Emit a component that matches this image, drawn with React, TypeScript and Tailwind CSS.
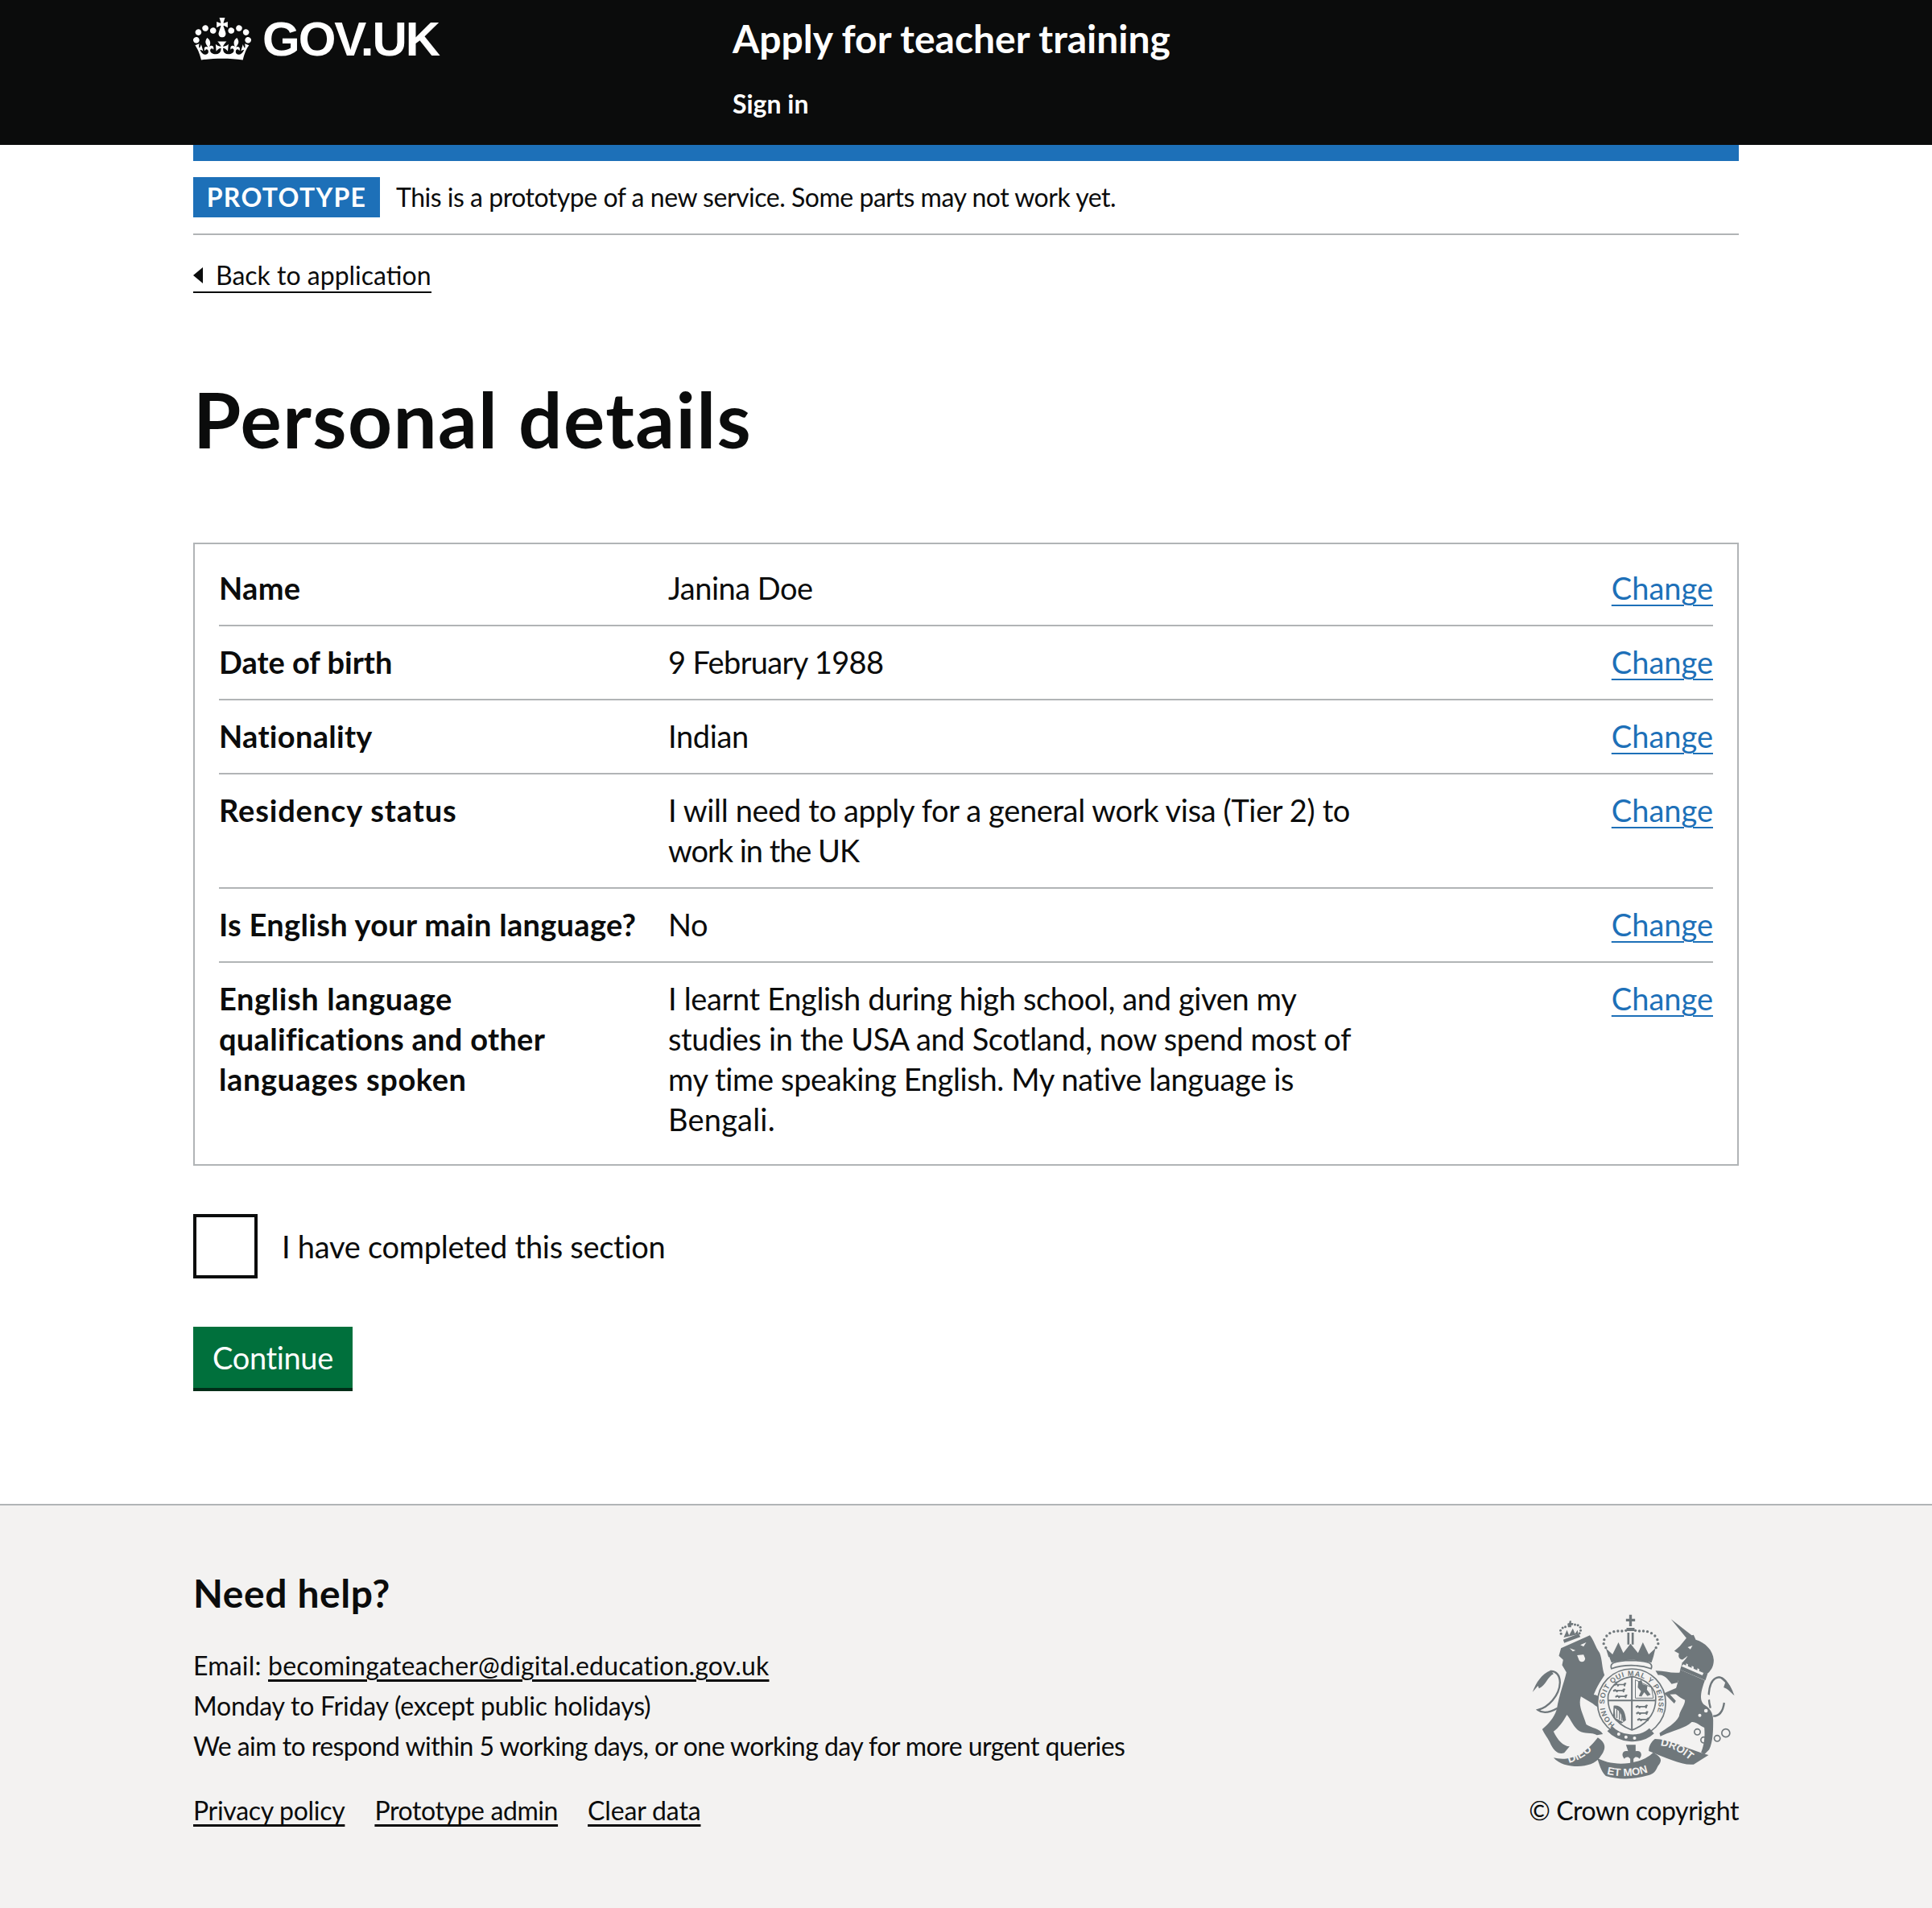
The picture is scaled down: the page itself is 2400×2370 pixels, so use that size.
import React from "react";

const font = "font-['Lato','Liberation_Sans',sans-serif]";

type Row = {
  label: string[];
  value: string[];
};

const rows: Row[] = [
  { label: ["Name"], value: ["Janina Doe"] },
  { label: ["Date of birth"], value: ["9 February 1988"] },
  { label: ["Nationality"], value: ["Indian"] },
  {
    label: ["Residency status"],
    value: ["I will need to apply for a general work visa (Tier 2) to", "work in the UK"],
  },
  { label: ["Is English your main language?"], value: ["No"] },
  {
    label: ["English language", "qualifications and other", "languages spoken"],
    value: [
      "I learnt English during high school, and given my",
      "studies in the USA and Scotland, now spend most of",
      "my time speaking English. My native language is",
      "Bengali.",
    ],
  },
];

// Lato runs a little differently from the original face on these lines
const lineTracking: Record<string, string> = {
  "Date of birth": "tracking-[0px]",
  "Residency status": "tracking-[0.85px]",
  "English language": "tracking-[0.6px]",
  "languages spoken": "tracking-[0.6px]",
  "Janina Doe": "tracking-[-0.5px]",
  "9 February 1988": "tracking-[-0.66px]",
  "work in the UK": "tracking-[-1.05px]",
  "Bengali.": "tracking-[0.2px]",
};

function Crown() {
  return (
    <svg viewBox="0 0 132 97" className="w-[72px] h-[53px] fill-white" aria-hidden="true">
      <path
        fillRule="evenodd"
        d="M25 30.2c3.5 1.5 7.7-.2 9.1-3.7 1.5-3.6-.2-7.8-3.9-9.2-3.6-1.4-7.6.3-9.1 3.9-1.4 3.5.3 7.5 3.9 9zM9 39.5c3.6 1.5 7.8-.2 9.2-3.7 1.5-3.6-.2-7.8-3.9-9.1-3.6-1.5-7.6.2-9.1 3.8-1.4 3.5.3 7.5 3.8 9zM4.4 57.2c3.5 1.5 7.7-.2 9.1-3.8 1.5-3.6-.2-7.7-3.9-9.1-3.5-1.5-7.6.3-9.1 3.8-1.4 3.5.3 7.6 3.9 9.1zm38.3-21.4c3.5 1.5 7.7-.2 9.1-3.8 1.5-3.6-.2-7.7-3.9-9.1-3.6-1.5-7.6.3-9.1 3.8-1.3 3.6.4 7.7 3.9 9.1zm64.4-5.6c-3.6 1.5-7.8-.2-9.1-3.7-1.5-3.6.2-7.8 3.8-9.2 3.6-1.4 7.7.3 9.2 3.9 1.3 3.5-.4 7.5-3.9 9zm15.9 9.3c-3.6 1.5-7.7-.2-9.1-3.7-1.5-3.6.2-7.8 3.7-9.1 3.6-1.5 7.7.2 9.2 3.8 1.5 3.5-.3 7.5-3.8 9zm4.7 17.7c-3.6 1.5-7.8-.2-9.2-3.8-1.5-3.6.2-7.7 3.9-9.1 3.6-1.5 7.7.3 9.2 3.8 1.3 3.5-.4 7.6-3.9 9.1zM89.3 35.8c-3.6 1.5-7.8-.2-9.2-3.8-1.4-3.6.2-7.7 3.9-9.1 3.6-1.5 7.7.3 9.2 3.8 1.4 3.6-.3 7.7-3.9 9.1zM69.7 17.7l8.9 4.7V9.3l-8.9 2.8c-.2-.3-.5-.6-.9-.9L72.4 0H59.6l3.5 11.2c-.3.3-.6.5-.9.9l-8.8-2.8v13.1l8.8-4.7c.3.3.6.7.9.9l-5 15.4v.1c-.2.8-.4 1.6-.4 2.4 0 4.1 3.1 7.5 7 8.1h.2c.3 0 .7.1 1 .1.4 0 .7 0 1-.1h.2c4-.6 7.1-4.1 7.1-8.1 0-.8-.1-1.7-.4-2.4V34l-5.1-15.4c.4-.2.7-.6 1-.9zM66 92.8c16.9 0 32.8 1.1 47.1 3.2 4-16.9 8.9-26.7 14-33.5l-9.6-3.4c1 4.9 1.1 7.2 0 10.2-1.5-1.4-3-4.3-4.2-8.7L108.6 76c2.8-2 5-3.2 7.5-3.3-4.4 9.4-10 11.9-13.6 11.2-4.3-.8-6.3-4.6-5.6-7.9 1-4.7 5.7-5.9 8-.5 4.3-8.7-3-11.4-7.6-8.8 7.1-7.2 7.9-13.5 2.1-21.1-8 6.1-8.1 12.3-4.5 20.8-4.7-5.4-12.1-2.5-9.5 6.2 3.4-5.2 7.9-2 7.2 3.1-.6 4.3-6.4 7.8-13.5 7.2-10.3-.9-10.9-8-11.2-13.8 2.5-.5 7.1 1.8 11 7.3L80.2 60c-4.1 4.4-8 5.3-12.3 5.4 1.4-4.4 8-11.6 8-11.6H55.5s6.4 7.2 7.9 11.6c-4.2-.1-8-1-12.3-5.4l1.4 16.4c3.9-5.5 8.5-7.7 10.9-7.3-.3 5.8-.9 12.8-11.1 13.8-7.2.6-12.9-2.9-13.5-7.2-.7-5 3.8-8.3 7.1-3.1 2.7-8.7-4.6-11.6-9.4-6.2 3.7-8.5 3.6-14.7-4.6-20.8-5.8 7.6-5 13.9 2.2 21.1-4.7-2.6-11.9.1-7.7 8.8 2.3-5.5 7.1-4.2 8.1.5.7 3.3-1.3 7.1-5.7 7.9-3.5.7-9-1.8-13.5-11.2 2.5.1 4.7 1.3 7.5 3.3l-4.7-15.4c-1.2 4.4-2.7 7.2-4.3 8.7-1.1-3-.9-5.3 0-10.2l-9.5 3.4c5 6.9 9.9 16.7 14 33.5 14.8-2.1 30.8-3.2 47.7-3.2z"
      />
    </svg>
  );
}

// Small walking lion used in the shield quarters
function Passant({ x, y }: { x: number; y: number }) {
  return (
    <path
      transform={`translate(${x} ${y})`}
      d="M0 2 l8 -4 l4 3 l22 0 l6 -5 l6 2 l-3 5 l-2 7 l-4 0 l-2 -4 l-16 0 l-3 4 l-5 0 l0 -4 l-6 0 l-1 3 l-4 -3 Z"
    />
  );
}

// Royal coat of arms, hand drawn; coordinates follow a 3x crop of the crest
function Crest() {
  const grey = "#6f777b";
  const bg = "#f3f2f1";
  return (
    <svg viewBox="70 45 755 615" className="w-[252px] h-[205px] mr-[5px]" aria-hidden="true">
      <defs>
        <path id="garter" d="M379 456 A101 101 0 1 1 497 460" />
        <path id="dieu" d="M205 600 C250 590 290 560 325 520" />
        <path id="etMon" d="M345 640 C400 655 470 650 525 625" />
        <path id="droit" d="M548 535 C590 540 635 565 670 600" />
      </defs>

      {/* lion */}
      <path
        fill={grey}
        d="M178 172 L285 124 C300 140 305 165 322 190 C332 215 330 245 340 272 L322 300 C310 320 304 335 300 345 C322 348 338 366 345 388 L335 412 C322 395 308 388 296 378 L252 352 C240 388 262 420 272 456 C292 470 322 470 334 492 L312 496 C290 484 265 492 245 480 C226 468 216 440 200 420 C186 445 168 470 150 482 C166 516 186 536 210 538 L190 562 C170 570 150 556 136 522 C128 506 116 492 108 474 C130 456 152 432 162 400 C172 340 190 300 198 262 L182 235 L186 215 L170 200 Z"
      />
      <path fill="none" stroke={grey} strokeWidth="7" d="M165 395 C130 415 105 412 92 402 C130 392 172 350 174 300 C174 272 158 255 138 258" />
      <path fill={grey} d="M72 335 C85 300 105 268 140 254 L150 268 C128 278 122 310 96 322 L92 312 Z" />
      <path fill={bg} d="M210 172 L232 180 L222 184 Z M250 160 L272 150 L262 166 Z M238 198 L262 196 L268 210 C268 225 248 228 244 214 Z" />
      {/* lion crown */}
      <path fill={grey} d="M186 140 L244 118 L250 130 L190 152 Z M204 94 L202 80 L208 78 L210 70 L216 70 L216 78 L224 78 L222 86 L216 86 L216 94 Z" />
      <path fill={grey} d="M188 132 L200 104 L208 124 L222 98 L230 118 L240 104 L242 120 Z" />
      <g fill={grey}>
        {[
          [178, 118], [176, 106], [184, 96], [194, 92], [230, 84], [241, 86], [250, 94], [251, 106], [247, 116],
        ].map(([cx, cy]) => (
          <circle key={`${cx}-${cy}`} cx={cx} cy={cy} r="4.5" />
        ))}
      </g>

      {/* unicorn */}
      <path fill={grey} d="M588 64 L668 126 L650 140 Z" />
      <path fill={grey} d="M650 128 L672 122 L680 140 C715 150 745 180 747 215 C748 240 735 258 722 268 L628 228 C640 215 648 205 650 200 L632 214 C622 216 612 205 618 192 L600 182 L620 165 Z" />
      <path fill={grey} d="M622 252 L714 292 C700 330 690 370 715 385 C730 395 745 410 745 440 C745 475 745 520 730 550 L712 568 L700 560 C712 530 715 500 712 468 C695 460 680 445 665 447 C640 470 600 478 572 490 L548 500 L545 488 C570 470 605 452 618 425 C620 405 640 385 640 365 C625 360 610 345 600 340 C612 310 618 280 622 252 Z" />
      <path fill={grey} d="M626 262 C590 268 565 255 530 256 L540 272 C560 268 575 285 590 305 L612 300 L620 280 Z" />
      <path fill={grey} d="M612 318 L562 340 L600 378 L606 368 L584 344 L622 342 Z" />
      <path fill="none" stroke={grey} strokeWidth="7" d="M735 395 C722 350 728 285 765 280 C790 280 800 310 815 335 M745 425 C770 425 782 405 786 375" />
      <path fill={grey} d="M764 276 C795 282 812 315 824 348 C808 335 798 322 784 318 L790 300 Z" />
      <path fill={bg} d="M650 168 L668 162 L660 176 Z" />
      <path fill={grey} d="M630 226 L724 268 L716 292 L622 252 Z" />
      <path fill={bg} d="M634 232 l10 4 l0 -7 l7 3 l0 7 l14 6 l0 -7 l7 3 l0 7 l14 6 l0 -7 l7 3 l0 7 l16 7 l-4 9 l-78 -34 Z" />
      <g fill={bg}>
        <circle cx="605" cy="245" r="10" />
        <circle cx="725" cy="355" r="10" />
        <circle cx="718" cy="405" r="7" />
        <circle cx="695" cy="422" r="6" />
      </g>
      <g fill="none" stroke={grey} strokeWidth="5">
        <circle cx="686" cy="484" r="11" />
        <circle cx="710" cy="514" r="11" />
        <circle cx="760" cy="508" r="11" />
        <circle cx="792" cy="488" r="15" />
      </g>

      {/* royal crown */}
      <path fill={grey} d="M420 62 h12 v-15 h10 v15 h12 v10 h-12 v18 h-10 v-18 h-12 Z M422 96 h30 v12 h-30 Z M425 114 h8 v44 h-8 Z M441 114 h8 v44 h-8 Z" />
      <g fill={grey}>
        {[
          [420, 106], [405, 108], [390, 108], [375, 110], [360, 116], [348, 126], [339, 140], [337, 155], [345, 170],
          [455, 106], [470, 108], [485, 108], [500, 110], [515, 116], [528, 126], [537, 140], [540, 155], [532, 170],
        ].map(([cx, cy]) => (
          <circle key={`${cx}-${cy}`} cx={cx} cy={cy} r="5" />
        ))}
      </g>
      <path fill={grey} d="M345 172 L370 195 L392 150 L410 190 L437 155 L465 190 L483 150 L505 195 L530 172 L522 205 L355 205 Z" />
      <path fill={grey} d="M358 205 C410 192 465 192 522 205 L515 226 C460 212 415 212 366 226 Z" />

      {/* garter + shield */}
      <circle cx="441" cy="376" r="127" fill={bg} stroke={grey} strokeWidth="5" />
      <path fill={bg} stroke={grey} strokeWidth="5" d="M366 248 C358 228 375 219 440 217 C505 219 522 228 514 248 C470 232 410 232 366 248 Z" />
      <path fill="none" stroke={grey} strokeWidth="5" d="M442 278 C482 283 517 305 530 345 C536 400 510 452 442 477 C374 452 348 400 354 345 C367 305 402 283 442 278 Z" />
      <path fill={grey} d="M439 278 h6 v199 h-6 Z M354 364 h176 v6 h-176 Z" />
      <g fill={grey}>
        <Passant x={376} y={304} />
        <Passant x={372} y={326} />
        <Passant x={380} y={348} />
        <Passant x={456} y={386} />
        <Passant x={458} y={410} />
        <Passant x={462} y={434} />
      </g>
      <path fill={grey} d="M466 296 L478 290 L482 306 L500 312 L498 326 L512 345 L500 350 L488 336 L478 352 L468 350 L476 332 L464 318 Z" />
      <path fill="none" stroke={grey} strokeWidth="3" d="M455 290 L515 318 L522 358 L455 358 Z" />
      <path fill={grey} d="M374 386 C400 382 418 402 420 440 L410 448 C406 420 396 402 378 396 L380 432 L410 448 L404 452 C390 448 380 442 372 430 Z" />
      <path fill="none" stroke={grey} strokeWidth="4" d="M386 400 L386 432 M396 406 L396 438 M405 416 L405 442" />

      <path fill="none" stroke={grey} strokeWidth="26" d="M360 472 C395 510 470 522 516 480" />
      <circle cx="393" cy="492" r="6" fill={bg} />
      <circle cx="420" cy="503" r="6" fill={bg} />
      <circle cx="452" cy="507" r="6" fill={bg} />
      <text fill={grey} fontFamily="Liberation Sans, sans-serif" fontWeight="700" fontSize="27" letterSpacing="2.5">
        <textPath href="#garter" startOffset="0">HONI SOIT QUI MAL Y PENSE</textPath>
      </text>

      {/* motto ribbon */}
      <path fill={grey} d="M150 580 C190 590 250 590 315 505 C345 525 350 545 322 580 C300 610 245 620 190 605 C175 600 160 592 150 580 Z" />
      <path fill={grey} d="M528 510 C580 510 640 545 728 570 L672 605 C630 610 570 580 505 555 C505 535 515 520 528 510 Z" />
      <path fill={grey} d="M312 580 C360 612 470 612 522 560 C555 580 555 590 540 610 C530 630 525 640 505 645 C450 662 390 662 345 648 C325 630 320 600 312 580 Z" />
      <g fill={bg} fontFamily="Liberation Sans, sans-serif" fontWeight="700" fontSize="42">
        <text><textPath href="#dieu" startOffset="2">DIEU</textPath></text>
        <text fontSize="40"><textPath href="#etMon" startOffset="4">ET MON</textPath></text>
        <text fontSize="40"><textPath href="#droit" startOffset="0">DROIT</textPath></text>
      </g>
      {/* fleur de lis */}
      <path fill={grey} d="M420 532 h36 v24 c20 -6 28 14 14 28 c-4 -6 -10 -8 -16 -6 l-6 6 v26 h-12 v-26 l-6 -6 c-6 -2 -12 0 -16 6 c-14 -14 -6 -34 14 -28 Z" />
    </svg>
  );
}

export default function App() {
  return (
    <div className={`${font} min-h-[2370px] bg-white text-[#0b0c0c] text-[38px] leading-[50px]`}>
      <header className="bg-[#0b0c0c] h-[180px] text-white">
        <div className="mx-[240px] flex">
          <div className="w-[670px] flex items-center gap-[14px] h-[96px]">
            <Crown />
            <span className="font-['Liberation_Sans',sans-serif] font-bold text-[60px] leading-none tracking-[-2px] mt-[2px]">
              GOV.UK
            </span>
          </div>
          <div>
            <div className="font-bold text-[48px] leading-[50px] mt-[23px]">Apply for teacher training</div>
            <div className="font-bold text-[32px] leading-[40px] mt-[36px]">Sign in</div>
          </div>
        </div>
      </header>

      <main className="mx-[240px]">
        <div className="h-[20px] bg-[#1d70b8]" />
        <div className="flex items-start h-[92px] pt-[20px] border-b-2 border-[#b1b4b6]">
          <span className="bg-[#1d70b8] text-white font-bold text-[32px] leading-[50px] h-[50px] w-[232px] text-center tracking-[1.3px]">
            PROTOTYPE
          </span>
          <span className="ml-[20px] text-[32px] leading-[50px] tracking-[-0.48px]">
            This is a prototype of a new service. Some parts may not work yet.
          </span>
        </div>

        <a className="inline-flex items-center mt-[30px] border-b-2 border-[#0b0c0c] text-[32px] leading-[40px] h-[42px]">
          <span className="w-0 h-0 border-y-[10px] border-y-transparent border-r-[12px] border-r-[#0b0c0c] mr-[16px]" />
          Back to application
        </a>

        <h1 className="font-bold text-[96px] leading-[100px] tracking-[1.4px] mt-[106px]">Personal details</h1>

        <section className="mt-[104px] border-2 border-[#b1b4b6] px-[30px] pb-[31px]">
          {rows.map((row, i) => (
            <div
              key={row.label[0]}
              className={`flex ${i === 0 ? "pt-[29px]" : "pt-[19px]"} ${
                i === rows.length - 1 ? "" : "pb-[21px] border-b-2 border-[#b1b4b6]"
              }`}
            >
              <div className="w-[558px] font-bold whitespace-nowrap tracking-[0.3px]">
                {row.label.map((line) => (
                  <div key={line} className={lineTracking[line]}>{line}</div>
                ))}
              </div>
              <div className="flex-1 whitespace-nowrap tracking-[-0.36px]">
                {row.value.map((line) => (
                  <div key={line} className={lineTracking[line]}>{line}</div>
                ))}
              </div>
              <a className="text-[#1d70b8] underline underline-offset-[6px] decoration-2">Change</a>
            </div>
          ))}
        </section>

        <label className="flex items-center mt-[60px]">
          <span className="w-[80px] h-[80px] border-4 border-[#0b0c0c] bg-white" />
          <span className="ml-[30px] tracking-[-0.28px]">I have completed this section</span>
        </label>

        <button className="block mt-[60px] bg-[#00703c] text-white w-[198px] h-[80px] border-b-4 border-[#002d18] text-center tracking-[-0.36px]">
          Continue
        </button>
      </main>

      <footer className="mt-[140px] h-[502px] bg-[#f3f2f1] border-t-2 border-[#b1b4b6]">
        <div className="mx-[240px] pt-[79px] flex justify-between items-end">
          <div className="text-[32px] leading-[50px]">
            <h2 className="font-bold text-[48px] leading-[60px] mb-[35px] tracking-[0.6px]">Need help?</h2>
            <p className="tracking-[0.19px]">
              Email: <a className="underline underline-offset-[5px]">becomingateacher@digital.education.gov.uk</a>
            </p>
            <p className="tracking-[-0.22px]">Monday to Friday (except public holidays)</p>
            <p className="tracking-[-0.55px]">We aim to respond within 5 working days, or one working day for more urgent queries</p>
            <ul className="flex gap-[37px] mt-[30px]">
              <li><a className="underline underline-offset-[5px] tracking-[-0.3px]">Privacy policy</a></li>
              <li><a className="underline underline-offset-[5px] tracking-[-0.4px]">Prototype admin</a></li>
              <li><a className="underline underline-offset-[5px] tracking-[-0.15px]">Clear data</a></li>
            </ul>
          </div>
          <div className="flex flex-col items-end">
            <Crest />
            <div className="text-[32px] leading-[50px] mt-[14px] tracking-[-0.45px]">© Crown copyright</div>
          </div>
        </div>
      </footer>
    </div>
  );
}
